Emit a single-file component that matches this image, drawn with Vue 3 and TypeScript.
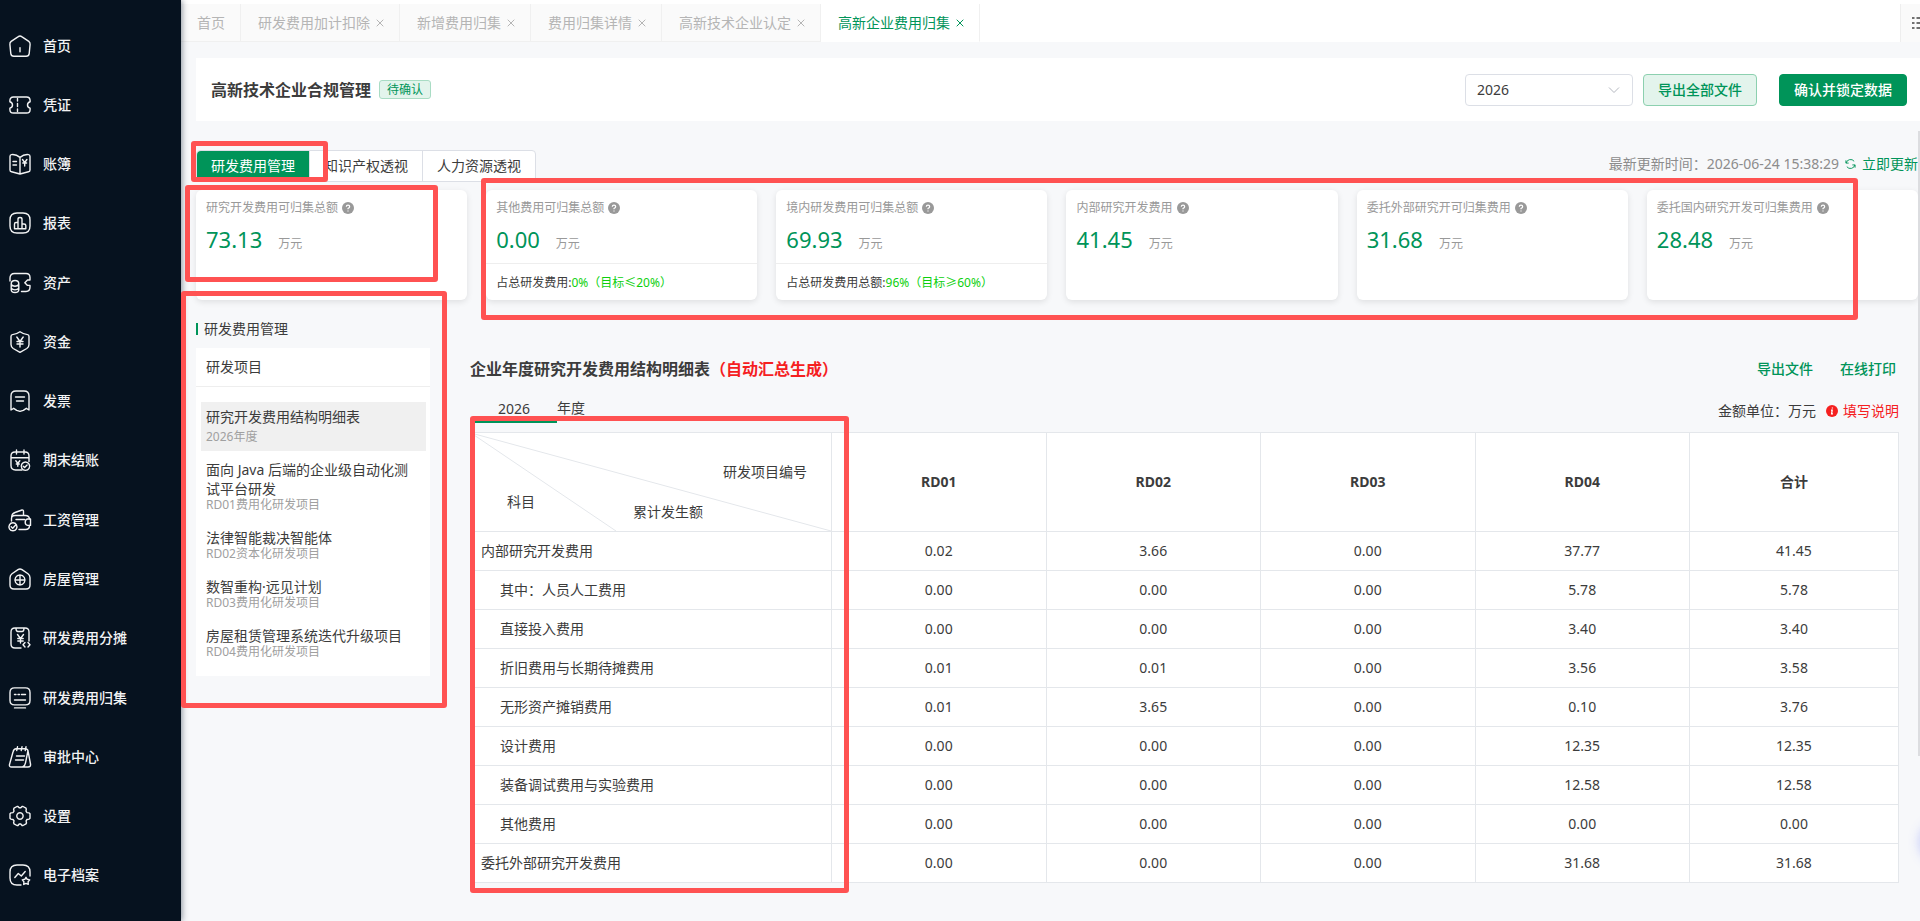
<script setup lang="ts">
import { ref } from 'vue'

interface NavItem { label: string; paths: string[] }
interface PageTab { label: string; closable: boolean }
interface Stat { title: string; value: string; note?: string; ratio?: string }
interface Project { name: string; kind: string }
interface Row { name: string; child: boolean; values: string[] }

const check = 'M14.2 17.2l1.4 1.4 2.5-2.7'

const nav: NavItem[] = [
  { label: '首页', paths: ['M9.3 1.6Q11 .3 12.7 1.6L19.8 6.4Q21.3 7.6 21.1 9.4L20.2 18.6Q19.8 21.2 17.2 21.2H4.8Q2.2 21.2 1.8 18.6L.9 9.4Q.7 7.6 2.2 6.4Z', 'M11 12.8v4'] },
  { label: '凭证', paths: ['M4.5 3h13q3.6 0 3.6 3.6v1.2q-2.6.7-2.6 3.2t2.6 3.2v1.2q0 3.6-3.6 3.6h-13Q.9 19 .9 15.4v-1.2Q3.5 13.5 3.5 11T.9 7.8V6.6Q.9 3 4.5 3Z', 'M8.5 4.5v2.5M8.5 9.5v3M8.5 15v2.5'] },
  { label: '账簿', paths: ['M11 4.4Q7 1 2.5 1.6 1 1.8 1 3.4V17q0 1.5 1.5 1.7L11 21l8.5-2.3Q21 18.5 21 17V3.4q0-1.6-1.5-1.8Q15 1 11 4.4ZM11 4.4V21', 'M4 8.5h3.5M4 12h3.5M13.5 6.5l2.2 3 2.2-3M15.7 9.5V13M13.8 10h3.8'] },
  { label: '报表', paths: ['M8 1h6q7 0 7 7v6q0 7-7 7H8q-7 0-7-7V8q0-7 7-7Z', 'M5.5 16.8V12q0-1.5 1.5-1.5h2V7.2Q9 5.5 11 5.5t2 1.7v4.8h2q1.8 0 1.8 1.5v3.3ZM9 10.5v6M13 12v4.5'] },
  { label: '资产', paths: ['M1 9V6Q1 1.500 5.500 1.500H17q4 0 4 4V8h-2.500l-2.700 2.700 2.700 2.700H21V15q0 4.500-4 4.500h-4.500', 'M2.200 12q0-3.500 3.800-3.500T9.800 12v5.500q0 3-3.800 3t-3.800-3ZM2.200 12.500q1.200 1.700 3.800 1.700t3.800-1.700M2.200 16.200q1.200 1.700 3.800 1.700t3.800-1.700'] },
  { label: '资金', paths: ['M11 .8q4 2.8 7.5 2.8Q20 3.7 20 5.5v8q0 2.5-2.2 4L11 21.3l-6.8-3.8Q2 16 2 13.5v-8q0-1.8 1.500-1.900Q7 3.6 11 .8Z', 'M7.8 6l3.2 4.5L14.2 6M11 10.5v5.5M8 10.5h6M8 13h6'] },
  { label: '发票', paths: ['M2 20V6q0-5 5-5h8q5 0 5 5v14l-2.7-1.7-3 2L11 21.3l-3.3-1-3-2Z', 'M6.5 7h9M7.5 11h7'] },
  { label: '期末结账', paths: ['M13 21H6.5Q2 21 2 16.5V7q0-4 4-4h10q4 0 4 4v5.5M2 8.8h18M7.5 1v4M15 1v4', 'M6.800 11.700l2 2.500 2-2.500M8.800 14.200v3M7.300 15h3', 'M16.5 13a4.2 4.2 0 1 1-.1 0Z', check] },
  { label: '工资管理', paths: ['M2.5 12V9.5Q2.5 6.5 6 6.5h10.5q3.5 0 4 3.3M20.5 16.5q0 4-4 4H10', 'M2.8 7.5Q3 4.5 6 3.5l7-2.5q1.5-.3 1.5 1.5v3.8M7 10.5h8.5', 'M21.5 10h-3q-2.3.6-2.3 3.2t2.3 3.2h3Z', 'M4 13.8a4 4 0 1 1-.1 0ZM2.2 17.8l1.5 1.5 2.5-2.8'] },
  { label: '房屋管理', paths: ['M9 1.6Q11 .3 13 1.6l6 4.2q2 1.5 2 4V17q0 4-4 4H5q-4 0-4-4V9.8q0-2.5 2-4Z', 'M11 7a5 5 0 1 1-.1 0ZM11 7v10M6 12h10'] },
  { label: '研发费用分摊', paths: ['M12 21H6q-4 0-4-4V5q0-4 4-4h10q4 0 4 4v9M7 1.2Q7 4.5 9 4.5h4q2 0 2-3.3', 'M8.5 7.5l3 4 3-4M11.5 11.5V16M8.8 11.5h5.4M8.8 14h5.4', 'M16 15.500l-2 2.200 2 2.300M19 15.500l2 2.200-2 2.300'] },
  { label: '研发费用归集', paths: ['M5.5 .9h11q4.5 0 4.5 4.5v8q0 4.5-4.5 4.5h-11Q1 17.9 1 13.4v-8Q1 .9 5.5 .9ZM5.5 20.9h11', 'M5.5 7.5H7M9 7.5h1.5M12.5 7.5h4M5.5 13h11'] },
  { label: '审批中心', paths: ['M7 2.8h9q3 0 3.2 3L21.5 18q.5 3-2.5 3H2.5Q0 21 .5 18.5L4 6q.8-3.2 3-3.2ZM19 4.5l-2.5 12.3Q16 20 13.5 21', 'M8.5 .8L7.7 4.5M13 .8l-.8 3.7M17 .8l-.8 3.7M7.5 10h8M6.5 14h8'] },
  { label: '设置', paths: ['M8 1.5h1l1.2 1.3h1.6L13 1.5h1l3 1.7.3 1-.3 2 1 1.4 2.2.3.8.8v4.6l-.8.8-2.2.4-.9 1.4.4 2-.5 1L14 20.5h-1L11.8 19h-1.6L9 20.5H8L5 18.8l-.4-1 .4-2-1-1.3-2.2-.4-.8-.8V8.700l.8-.8L4 7.600l1-1.400-.4-2 .4-1Z', 'M11 7.800a3.200 3.200 0 1 1-.1 0Z'] },
  { label: '电子档案', paths: ['M12 21H8q-7 0-7-7V8q0-7 7-7h6q7 0 7 7v4', 'M5.8 13.5l3.5-4 3 2.5 3.9-4.500', 'M17 13.3l1.2 2 2.5.6-1.6 1.9.2 2.6-2.3-1-2.3 1 .2-2.6-1.6-1.9 2.5-.6Z'] },
]

const tabs: PageTab[] = [
  { label: '首页', closable: false },
  { label: '研发费用加计扣除', closable: true },
  { label: '新增费用归集', closable: true },
  { label: '费用归集详情', closable: true },
  { label: '高新技术企业认定', closable: true },
  { label: '高新企业费用归集', closable: true },
]
const activeTab = ref(5)
const year = ref('2026')
const views = ['研发费用管理', '知识产权透视', '人力资源透视']
const activeView = ref(0)

const stats: Stat[] = [
  { title: '研究开发费用可归集总额', value: '73.13' },
  { title: '其他费用可归集总额', value: '0.00', note: '占总研发费用:', ratio: '0%（目标≤20%）' },
  { title: '境内研发费用可归集总额', value: '69.93', note: '占总研发费用总额:', ratio: '96%（目标≥60%）' },
  { title: '内部研究开发费用', value: '41.45' },
  { title: '委托外部研究开可归集费用', value: '31.68' },
  { title: '委托国内研究开发可归集费用', value: '28.48' },
]

const projects: Project[] = [
  { name: '研究开发费用结构明细表', kind: '2026年度' },
  { name: '面向 Java 后端的企业级自动化测试平台研发', kind: 'RD01费用化研发项目' },
  { name: '法律智能裁决智能体', kind: 'RD02资本化研发项目' },
  { name: '数智重构·远见计划', kind: 'RD03费用化研发项目' },
  { name: '房屋租赁管理系统迭代升级项目', kind: 'RD04费用化研发项目' },
]
const activeProject = ref(0)

const columns = ['RD01', 'RD02', 'RD03', 'RD04', '合计']
const rows: Row[] = [
  { name: '内部研究开发费用', child: false, values: ['0.02', '3.66', '0.00', '37.77', '41.45'] },
  { name: '其中：人员人工费用', child: true, values: ['0.00', '0.00', '0.00', '5.78', '5.78'] },
  { name: '直接投入费用', child: true, values: ['0.00', '0.00', '0.00', '3.40', '3.40'] },
  { name: '折旧费用与长期待摊费用', child: true, values: ['0.01', '0.01', '0.00', '3.56', '3.58'] },
  { name: '无形资产摊销费用', child: true, values: ['0.01', '3.65', '0.00', '0.10', '3.76'] },
  { name: '设计费用', child: true, values: ['0.00', '0.00', '0.00', '12.35', '12.35'] },
  { name: '装备调试费用与实验费用', child: true, values: ['0.00', '0.00', '0.00', '12.58', '12.58'] },
  { name: '其他费用', child: true, values: ['0.00', '0.00', '0.00', '0.00', '0.00'] },
  { name: '委托外部研究开发费用', child: false, values: ['0.00', '0.00', '0.00', '31.68', '31.68'] },
]
</script>

<template>
  <div class="app">
    <nav class="sidebar" aria-label="主导航">
      <a v-for="item in nav" :key="item.label" href="#" class="nav-item">
        <svg class="nav-icon" viewBox="0 0 22 22" aria-hidden="true">
          <path v-for="d in item.paths" :key="d" :d="d" />
        </svg>
        <span>{{ item.label }}</span>
      </a>
    </nav>

    <main class="main">
      <div class="tabbar">
        <div
          v-for="(tab, i) in tabs"
          :key="tab.label"
          class="tab"
          :class="{ active: i === activeTab, home: !tab.closable }"
        >
          <button type="button" class="tab-label" @click="activeTab = i">{{ tab.label }}</button>
          <button v-if="tab.closable" type="button" class="tab-close" :aria-label="'关闭' + tab.label">
            <svg viewBox="0 0 8 8" aria-hidden="true"><path d="M.7.7l6.600 6.600M7.300.7L.7 7.300" /></svg>
          </button>
        </div>
        <button type="button" class="tab-menu" aria-label="标签列表">
          <svg viewBox="0 0 14 14" aria-hidden="true"><path d="M0 2h2.500M4.500 2H14M0 7h2.500M4.500 7H14M0 12h2.500M4.500 12H14" /></svg>
        </button>
      </div>

      <header class="header">
        <h1>高新技术企业合规管理</h1>
        <span class="badge">待确认</span>
        <div class="select">
          <select v-model="year" aria-label="年度">
            <option>2026</option>
            <option>2025</option>
          </select>
          <svg viewBox="0 0 12 8" aria-hidden="true"><path d="M1 1.500l5 5 5-5" /></svg>
        </div>
        <button type="button" class="btn plain">导出全部文件</button>
        <button type="button" class="btn solid">确认并锁定数据</button>
      </header>

      <div class="view-row">
        <div class="views">
          <button
            v-for="(v, i) in views"
            :key="v"
            type="button"
            class="view"
            :class="{ active: i === activeView }"
            @click="activeView = i"
          >{{ v }}</button>
          <span class="mark mark-view"></span>
        </div>
        <div class="updated">
          <span>最新更新时间：2026-06-24 15:38:29</span>
          <a href="#">
            <svg viewBox="0 0 12 12" aria-hidden="true"><path d="M1.200 5A5 5 0 0 1 10 3M10.800 7A5 5 0 0 1 2 9M1 2v3h3M11 10V7H8" /></svg>
            立即更新
          </a>
        </div>
      </div>

      <section class="stats">
        <article v-for="s in stats" :key="s.title" class="card">
          <h2>
            {{ s.title }}
            <svg viewBox="0 0 12 12" aria-hidden="true">
              <circle cx="6" cy="6" r="6" />
              <path d="M4.300 4.800Q4.300 3.200 6 3.200t1.700 1.500Q7.700 5.600 6 6.500v.7M6 8.500v.9" />
            </svg>
          </h2>
          <p class="figure"><strong>{{ s.value }}</strong><span>万元</span></p>
          <p v-if="s.note" class="note">{{ s.note }}<em>{{ s.ratio }}</em></p>
        </article>
        <span class="mark mark-total"></span>
        <span class="mark mark-stats"></span>
      </section>

      <div class="content">
        <aside class="aside">
          <h2>研发费用管理</h2>
          <div class="projects">
            <h3>研发项目</h3>
            <ul>
              <li v-for="(p, i) in projects" :key="p.name">
                <button type="button" class="project" :class="{ active: i === activeProject }" @click="activeProject = i">
                  <span class="name">{{ p.name }}</span>
                  <span class="kind">{{ p.kind }}</span>
                </button>
              </li>
            </ul>
          </div>
          <span class="mark mark-aside"></span>
        </aside>

        <section class="report">
          <div class="report-head">
            <h2>企业年度研究开发费用结构明细表<span>（自动汇总生成）</span></h2>
            <a href="#">导出文件</a>
            <a href="#">在线打印</a>
          </div>
          <div class="report-sub">
            <label class="year"><input v-model="year" type="text" />年度</label>
            <div class="hints">
              <span>金额单位：万元</span>
              <a href="#" class="help">
                <svg viewBox="0 0 12 12" aria-hidden="true">
                  <circle cx="6" cy="6" r="6" />
                  <path d="M6.400 2.600v1M5 5.200h1.200L5.600 8.900H7" />
                </svg>
                填写说明
              </a>
            </div>
          </div>
          <div class="table-wrap">
            <table>
              <colgroup>
                <col class="col-name" />
                <col v-for="c in columns" :key="c" />
              </colgroup>
              <thead>
                <tr>
                  <th class="corner">
                    <div class="corner-box">
                      <svg viewBox="0 0 360 98" preserveAspectRatio="none" aria-hidden="true">
                        <path d="M0 0L360 98M0 0L145 98" />
                      </svg>
                      <span class="c-project">研发项目编号</span>
                      <span class="c-subject">科目</span>
                      <span class="c-amount">累计发生额</span>
                    </div>
                  </th>
                  <th v-for="c in columns" :key="c">{{ c }}</th>
                </tr>
              </thead>
              <tbody>
                <tr v-for="r in rows" :key="r.name">
                  <td class="subject" :class="{ child: r.child }">{{ r.name }}</td>
                  <td v-for="(v, i) in r.values" :key="i">{{ v }}</td>
                </tr>
              </tbody>
            </table>
            <span class="mark mark-table"></span>
          </div>
        </section>
      </div>
      <span class="scroll-thumb"></span>
      <span class="glow"></span>
    </main>
  </div>
</template>

<style>
body {
  margin: 0;
  background: #f7f8fa;
}
</style>

<style scoped>
* {
  box-sizing: border-box;
}

.app {
  display: flex;
  min-height: 100vh;
  overflow: hidden;
  font: 14px/20px "Noto Sans", "Noto Sans CJK SC", sans-serif;
  color: #3c3c3c;
  background: #f7f8fa;
}

h1, h2, h3, p, ul {
  margin: 0;
  padding: 0;
  font-weight: 400;
  list-style: none;
}

button, input, select {
  font: inherit;
  color: inherit;
  margin: 0;
  padding: 0;
  border: 0;
  background: none;
}

button {
  cursor: pointer;
}

a {
  color: #009459;
  text-decoration: none;
}

svg {
  fill: none;
  stroke: currentColor;
  flex: none;
}

.sidebar {
  display: flex;
  flex-direction: column;
  flex: none;
  width: 181px;
  padding: 16px 0;
  background: #06121f;
  box-shadow: 1px 0 6px rgba(0, 21, 41, .45);
  z-index: 1;
}

.nav-item {
  flex: 1;
  display: flex;
  align-items: center;
  gap: 12px;
  padding-left: 9px;
  color: #f2f3f4;
  font-weight: 500;
}

.nav-icon {
  width: 22px;
  height: 22px;
  stroke-width: 1.4;
  stroke-linecap: round;
  stroke-linejoin: round;
  overflow: visible;
}

.main {
  position: relative;
  flex: 1;
  min-width: 0;
}

.tabbar {
  display: flex;
  height: 42px;
  border-top: 4px solid #f4f4f4;
  border-image: linear-gradient(#fff 75%, #f0f0f0 75%) 4;
  background: #fff;
}

.tab {
  display: flex;
  align-items: center;
  gap: 6px;
  padding: 0 15px 0 17px;
  border-right: 1px solid #f0f0f0;
  border-bottom: 1px solid #f0f0f0;
  background: #fafafa;
  color: #b5b5b5;
}

.tab.home {
  padding: 0 15px 0 16px;
}

.tab.active {
  background: #fff;
  border-bottom-color: #fff;
  color: #009459;
}

.tab-close {
  display: flex;
}

.tab-close svg {
  width: 8px;
  height: 8px;
}

.tab-menu {
  width: 20px;
  margin-left: auto;
  padding-left: 11px;
  overflow: hidden;
  border-left: 1px solid #eee;
  background: #fafafa;
  color: #444;
}

.tab-menu svg {
  display: block;
  width: 14px;
  height: 14px;
  stroke-width: 1.5;
}

.header {
  display: flex;
  align-items: center;
  height: 63px;
  margin: 16px 0 0 15px;
  padding: 0 13px 0 15px;
  background: #fff;
}

.header h1 {
  font-size: 16px;
  font-weight: 700;
}

.badge {
  margin-left: 8px;
  padding: 0 7px;
  border: 1px solid #a9dcc4;
  border-radius: 3px;
  background: #e3f4ec;
  color: #009459;
  font-size: 12px;
  line-height: 17px;
}

.select {
  display: flex;
  align-items: center;
  width: 168px;
  height: 32px;
  margin-left: auto;
  padding-right: 12px;
  border: 1px solid #dcdfe6;
  border-radius: 4px;
}

.select select {
  flex: 1;
  height: 30px;
  padding-left: 11px;
  appearance: none;
  outline: none;
}

.select svg {
  width: 12px;
  height: 8px;
  color: #b4b8c0;
}

.btn {
  height: 32px;
  padding: 0 14px;
  border: 1px solid #009459;
  border-radius: 4px;
  font-weight: 500;
}

.btn.plain {
  margin-left: 10px;
  border-color: #8cd0af;
  background: #e3f4ec;
  color: #009459;
}

.btn.solid {
  margin-left: 22px;
  background: #009459;
  color: #fff;
}

.view-row {
  display: flex;
  justify-content: space-between;
  align-items: center;
  margin: 29px 2px 0 15px;
}

.views {
  position: relative;
  display: flex;
  height: 32px;
  border: 1px solid #dcdfe6;
  border-radius: 4px 4px 0 0;
  background: #fff;
}

.view {
  padding: 0 14px;
  border-right: 1px solid #dcdfe6;
}

.view:nth-of-type(3) {
  border-right: 0;
}

.view.active {
  border-radius: 4px 0 0 0;
  background: #009459;
  color: #fff;
}

.updated {
  display: flex;
  gap: 6px;
  margin-bottom: 4px;
  color: #8c8c8c;
}

.updated a {
  display: flex;
  align-items: center;
  gap: 6px;
}

.updated svg {
  width: 11px;
  height: 12px;
}

.stats {
  position: relative;
  display: grid;
  grid-template-columns: repeat(6, 1fr);
  gap: 19px;
  margin: 8px 2px 0 15px;
}

.card {
  height: 110px;
  border-radius: 6px;
  background: #fff;
  box-shadow: 0 2px 6px rgba(0, 0, 0, .1);
}

.card h2 {
  display: flex;
  align-items: center;
  gap: 4px;
  padding: 8px 10px 0;
  font-size: 12px;
  color: #999;
}

.card h2 svg {
  width: 12px;
  height: 12px;
}

.card circle {
  fill: #999;
  stroke: none;
}

.card path {
  stroke: #fff;
  stroke-width: 1.2;
}

.figure {
  display: flex;
  align-items: baseline;
  gap: 16px;
  height: 45px;
  padding: 6px 10px 0;
  font-size: 12px;
  line-height: 30px;
  color: #999;
}

.figure strong {
  font-size: 22px;
  font-weight: 400;
  color: #009459;
}

.note {
  padding: 9px 10px;
  border-top: 1px solid #eee;
  font-size: 12px;
}

.note em {
  font-style: normal;
  color: #0dd00d;
}

.content {
  display: flex;
  gap: 40px;
  padding: 19px 21px 36px 15px;
}

.aside {
  position: relative;
  flex: none;
  width: 234px;
  align-self: flex-start;
}

.aside h2 {
  display: flex;
  align-items: center;
  gap: 6px;
  font-size: 14px;
}

.aside h2::before {
  content: "";
  width: 2px;
  height: 12px;
  background: #009459;
}

.projects {
  margin-top: 9px;
  padding-bottom: 10px;
  background: #fff;
}

.projects h3 {
  padding: 9px 10px;
  border-bottom: 1px solid #eee;
  font-size: 14px;
}

.projects ul {
  padding: 15px 4px 0 5px;
}

.project {
  display: flex;
  flex-direction: column;
  width: 100%;
  padding: 9px 10px 7px 5px;
  text-align: left;
  line-height: 19px;
}

.project.active {
  gap: 4px;
  padding: 5px 10px 7px 5px;
  background: #f0f0f0;
}

.kind {
  font-size: 12px;
  line-height: 14px;
  color: #a0a0a0;
}

.report {
  flex: 1;
  min-width: 0;
  padding-top: 38px;
}

.report-head {
  display: flex;
  align-items: center;
  gap: 27px;
  height: 24px;
  padding-right: 3px;
}

.report-head h2 {
  margin-right: auto;
  font-size: 16px;
  font-weight: 700;
}

.report-head h2 span {
  color: #f5201f;
}

.report-head a {
  font-weight: 500;
}

.report-sub {
  display: flex;
  justify-content: space-between;
  align-items: center;
  height: 36px;
  margin-top: 9px;
}

.year {
  display: flex;
  align-items: center;
  margin-left: 1px;
}

.year input {
  width: 86px;
  height: 30px;
  padding-top: 2px;
  border-bottom: 2px solid #009459;
  text-align: center;
  outline: none;
}

.hints {
  display: flex;
  gap: 10px;
  padding-top: 6px;
}

.help {
  display: flex;
  align-items: center;
  gap: 5px;
  color: #f5201f;
}

.help svg {
  width: 12px;
  height: 12px;
}

.help circle {
  fill: #f5201f;
  stroke: none;
}

.help path {
  stroke: #fff;
  stroke-width: 1.3;
}

.table-wrap {
  position: relative;
  margin-top: 6px;
}

table {
  width: 100%;
  table-layout: fixed;
  border-collapse: collapse;
  background: #fff;
}

.col-name {
  width: 361px;
}

col:last-child {
  width: 209px;
}

th, td {
  height: 39px;
  padding: 0;
  border: 1px solid #e4e7eb;
  text-align: center;
}

th {
  height: 99px;
  font-weight: 700;
}

.corner {
  font-weight: 400;
}

.corner-box {
  position: relative;
  height: 98px;
}

.corner-box svg {
  position: absolute;
  inset: 0;
  width: 100%;
  height: 100%;
  stroke: #e4e7eb;
}

.corner-box span {
  position: absolute;
}

.c-project {
  right: 24px;
  top: 29px;
}

.c-subject {
  left: 36px;
  bottom: 19px;
}

.c-amount {
  left: 45%;
  bottom: 9px;
}

.subject {
  padding-left: 10px;
  text-align: left;
}

.subject.child {
  padding-left: 29px;
}

.mark {
  position: absolute;
  border: 5px solid #ff5252;
  border-radius: 3px;
  pointer-events: none;
  z-index: 2;
}

.mark-view {
  left: -6px;
  top: -10px;
  width: 137px;
  height: 41px;
}

.mark-total {
  left: -11px;
  top: -5px;
  width: 253px;
  height: 97px;
}

.mark-stats {
  grid-column: 2 / 7;
  left: -5px;
  right: 60px;
  top: -12px;
  bottom: -20px;
}

.mark-aside {
  left: -15px;
  right: -17px;
  top: -28px;
  bottom: -32px;
}

.mark-table {
  left: 0;
  width: 379px;
  top: -16px;
  bottom: -10px;
}

.scroll-thumb {
  position: absolute;
  top: 131px;
  right: 0;
  width: 2px;
  height: 625px;
  background: #dcdde0;
}

.glow {
  position: absolute;
  right: -40px;
  bottom: 59px;
  width: 40px;
  height: 40px;
  border-radius: 50%;
  box-shadow: 0 0 12px rgba(90, 110, 250, .35);
}
</style>
